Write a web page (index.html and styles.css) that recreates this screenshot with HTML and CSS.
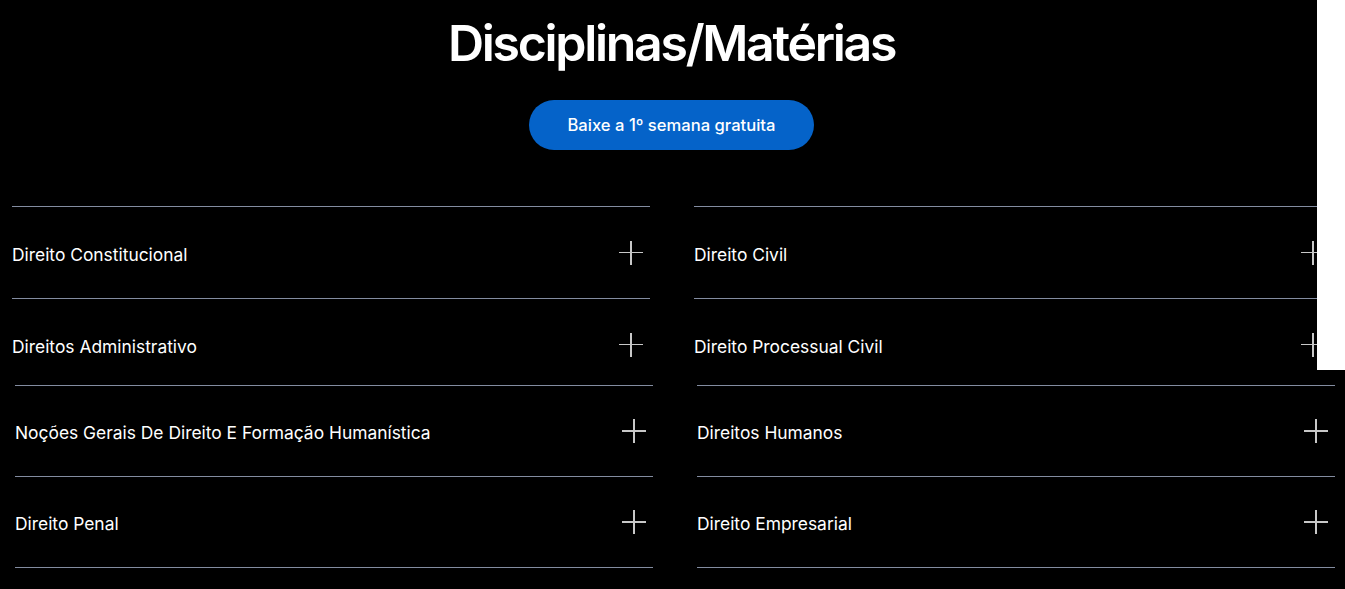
FILE: index.html
```html
<!DOCTYPE html>
<html lang="pt">
<head>
<meta charset="utf-8">
<link rel="stylesheet" href="styles.css">
</head>
<body>
<div class="top">
  <div class="top-main">
    <h1 class="title">Disciplinas/Matérias</h1>
    <div class="cta-wrap"><a class="cta" href="#">Baixe a 1º semana gratuita</a></div>
    <div class="grid grid-top">
      <div class="item"><span>Direito Constitucional</span><i class="plus"></i></div>
      <div class="item"><span>Direito Civil</span><i class="plus"></i></div>
      <div class="item"><span>Direitos Administrativo</span><i class="plus"></i></div>
      <div class="item"><span>Direito Processual Civil</span><i class="plus"></i></div>
    </div>
  </div>
  <div class="top-side"></div>
</div>
<div class="bottom">
  <div class="grid grid-bottom">
    <div class="item"><span>Noções Gerais De Direito E Formação Humanística</span><i class="plus"></i></div>
    <div class="item"><span>Direitos Humanos</span><i class="plus"></i></div>
    <div class="item"><span>Direito Penal</span><i class="plus"></i></div>
    <div class="item"><span>Direito Empresarial</span><i class="plus"></i></div>
  </div>
</div>
</body>
</html>
```
FILE: styles.css
```css
* { box-sizing: border-box; }
html, body { margin: 0; padding: 0; }
body {
  background: #000;
  color: #fff;
  font-family: Inter, "Noto Sans", sans-serif;
  width: 1345px;
  height: 589px;
  overflow: hidden;
}
.top {
  display: flex;
  height: 370px;
  overflow: hidden;
}
.top-main {
  width: 1317px;
  flex: none;
  overflow: hidden;
  background: #000;
}
.top-side {
  flex: 1;
  background: #fff;
}
.title {
  margin: 0;
  padding-top: 13px;
  height: 100px;
  text-align: center;
  font-size: 50px;
  font-weight: 600;
  letter-spacing: -2.3px;
  line-height: 60px;
  padding-left: 26px;
}
.cta-wrap {
  display: flex;
  justify-content: center;
  padding-left: 26px;
}
.cta {
  display: block;
  width: 285px;
  height: 50px;
  border-radius: 25px;
  background: #0563c9;
  color: #fff;
  text-decoration: none;
  font-size: 16.6px;
  font-weight: 500;
  line-height: 50px;
  text-align: center;
}
.grid {
  display: grid;
  grid-template-columns: 638px 638px;
  column-gap: 44px;
}
.grid-top {
  margin-top: 56px;
  padding-left: 12px;
  width: 1345px;
}
.item {
  display: flex;
  align-items: center;
  justify-content: space-between;
  border-top: 1px solid #838ca0;
  font-size: 17.4px;
  font-weight: 400;
  padding-right: 7px;
}
.item span { padding-top: 3px; }
.grid-top .item { height: 92px; }
.grid-bottom .item { height: 91px; }
.grid-bottom .item:nth-child(n+3) { border-bottom: 1px solid #838ca0; height: 92px; }
.bottom {
  padding-left: 15px;
  padding-top: 15px;
}
.plus {
  position: relative;
  display: block;
  width: 24px;
  height: 24px;
}
.plus::before, .plus::after {
  content: "";
  position: absolute;
  background: #c8c8c8;
}
.plus::before { left: 0; right: 0; top: 11px; height: 1.5px; }
.plus::after { top: 0; bottom: 0; left: 11px; width: 1.5px; }
```
